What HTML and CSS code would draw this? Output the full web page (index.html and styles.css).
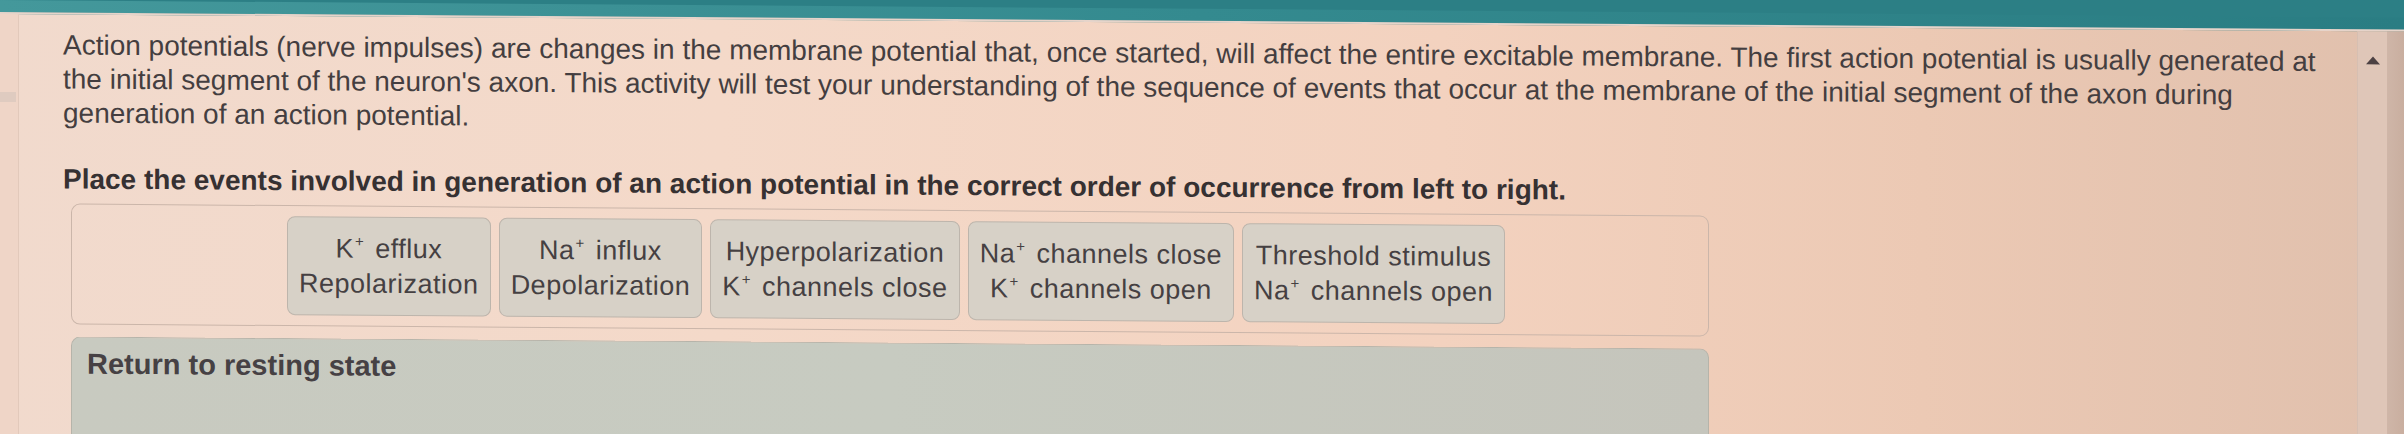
FILE: index.html
```html
<!DOCTYPE html>
<html lang="en">
<head>
<meta charset="utf-8">
<title>Action potential sequence</title>
<link rel="stylesheet" href="styles.css">
</head>
<body>
<div class="screen">
  <div class="topbar"></div>
  <div class="frame">
    <div class="gutter"><div class="gutter-tab"></div></div>
    <main class="main">
      <p class="intro">Action potentials (nerve impulses) are changes in the membrane potential that, once started, will affect the entire excitable membrane. The first action potential is usually generated at the initial segment of the neuron's axon. This activity will test your understanding of the sequence of events that occur at the membrane of the initial segment of the axon during generation of an action potential.</p>
      <p class="prompt">Place the events involved in generation of an action potential in the correct order of occurrence from left to right.</p>
      <div class="bank">
        <div class="tile"><span>K<sup class="ion">+</sup> efflux</span><span>Repolarization</span></div>
        <div class="tile"><span>Na<sup class="ion">+</sup> influx</span><span>Depolarization</span></div>
        <div class="tile"><span>Hyperpolarization</span><span>K<sup class="ion">+</sup> channels close</span></div>
        <div class="tile"><span>Na<sup class="ion">+</sup> channels close</span><span>K<sup class="ion">+</sup> channels open</span></div>
        <div class="tile"><span>Threshold stimulus</span><span>Na<sup class="ion">+</sup> channels open</span></div>
      </div>
      <div class="target"><span class="target-label">Return to resting state</span></div>
    </main>
    <div class="scrollbar">
      <div class="track"><div class="arrow"></div></div>
      <div class="edge"></div>
    </div>
  </div>
</div>
</body>
</html>
```

FILE: styles.css
```css
html, body {
  margin: 0;
  padding: 0;
}
body {
  width: 2404px;
  height: 434px;
  overflow: hidden;
  background: linear-gradient(to bottom, #2c7f85 0, #2c7f85 40px, #dcbcaa 40px);
  font-family: "Liberation Sans", Arial, sans-serif;
}
.screen {
  width: 2404px;
  height: 470px;
  display: flex;
  flex-direction: column;
  transform: skewY(0.42deg);
  transform-origin: 0 0;
}
.topbar {
  height: 12px;
  flex: none;
  background: linear-gradient(to right, #44989b, #348a8f 50%, #2a7d83);
  border-bottom: 2px solid #e6d4ca;
}
.frame {
  flex: 1;
  display: flex;
  background: linear-gradient(to right, #f1dacd 0%, #f4d9c9 30%, #f3d2bf 60%, #ecc9b4 80%, #e0c0ad 100%);
}
.gutter {
  width: 19px;
  flex: none;
  border-right: 1px solid #e2c9bb;
  background: #efd5c7;
  padding-top: 78px;
  box-sizing: border-box;
}
.gutter-tab {
  height: 10px;
  width: 16px;
  background: #dfcbc0;
}
.main {
  flex: 1;
  display: flex;
  flex-direction: column;
  padding: 14px 27px 0 44px;
  min-width: 0;
}
.intro {
  margin: 0;
  font-size: 28px;
  line-height: 34px;
  color: #443e40;
}
.prompt {
  margin: 32px 0 0;
  font-size: 28px;
  line-height: 34px;
  font-weight: 700;
  color: #363132;
}
.bank {
  margin: 7px 0 0 8px;
  width: 1638px;
  box-sizing: border-box;
  border: 1px solid #cbb6aa;
  border-radius: 9px;
  padding: 10px 10px 10px 22px;
  display: flex;
  justify-content: center;
  gap: 8px;
}
.tile {
  display: flex;
  flex-direction: column;
  align-items: center;
  padding: 14px 11px 13px;
  border: 1px solid #bdb5ac;
  border-radius: 8px;
  background: #d7d1c7;
  font-size: 27px;
  line-height: 35px;
  letter-spacing: 0.5px;
  color: #454042;
  white-space: nowrap;
}
.ion {
  font-size: 15px;
  line-height: 0;
  vertical-align: 11px;
  margin: 0 3px 0 1px;
}
.target {
  margin: 12px 0 0 8px;
  width: 1638px;
  box-sizing: border-box;
  flex: 1;
  border: 1px solid #b6b4aa;
  border-bottom: none;
  border-radius: 9px 9px 0 0;
  background: linear-gradient(to right, #c8cac0, #c7cbc1 50%, #c5c5bc);
  padding: 9px 15px;
}
.target-label {
  font-size: 29px;
  line-height: 34px;
  font-weight: 700;
  color: #464144;
}
.scrollbar {
  width: 47px;
  flex: none;
  display: flex;
}
.track {
  width: 30px;
  border-left: 1px solid #d6bfb2;
  background: #dfc6b8;
  display: flex;
  justify-content: center;
  padding-top: 25px;
  box-sizing: border-box;
}
.arrow {
  width: 0;
  height: 0;
  border-left: 7px solid transparent;
  border-right: 7px solid transparent;
  border-bottom: 8px solid #4c4143;
}
.edge {
  flex: 1;
  background: linear-gradient(to right, #cfb6a8, #c9ae9f);
}
```
